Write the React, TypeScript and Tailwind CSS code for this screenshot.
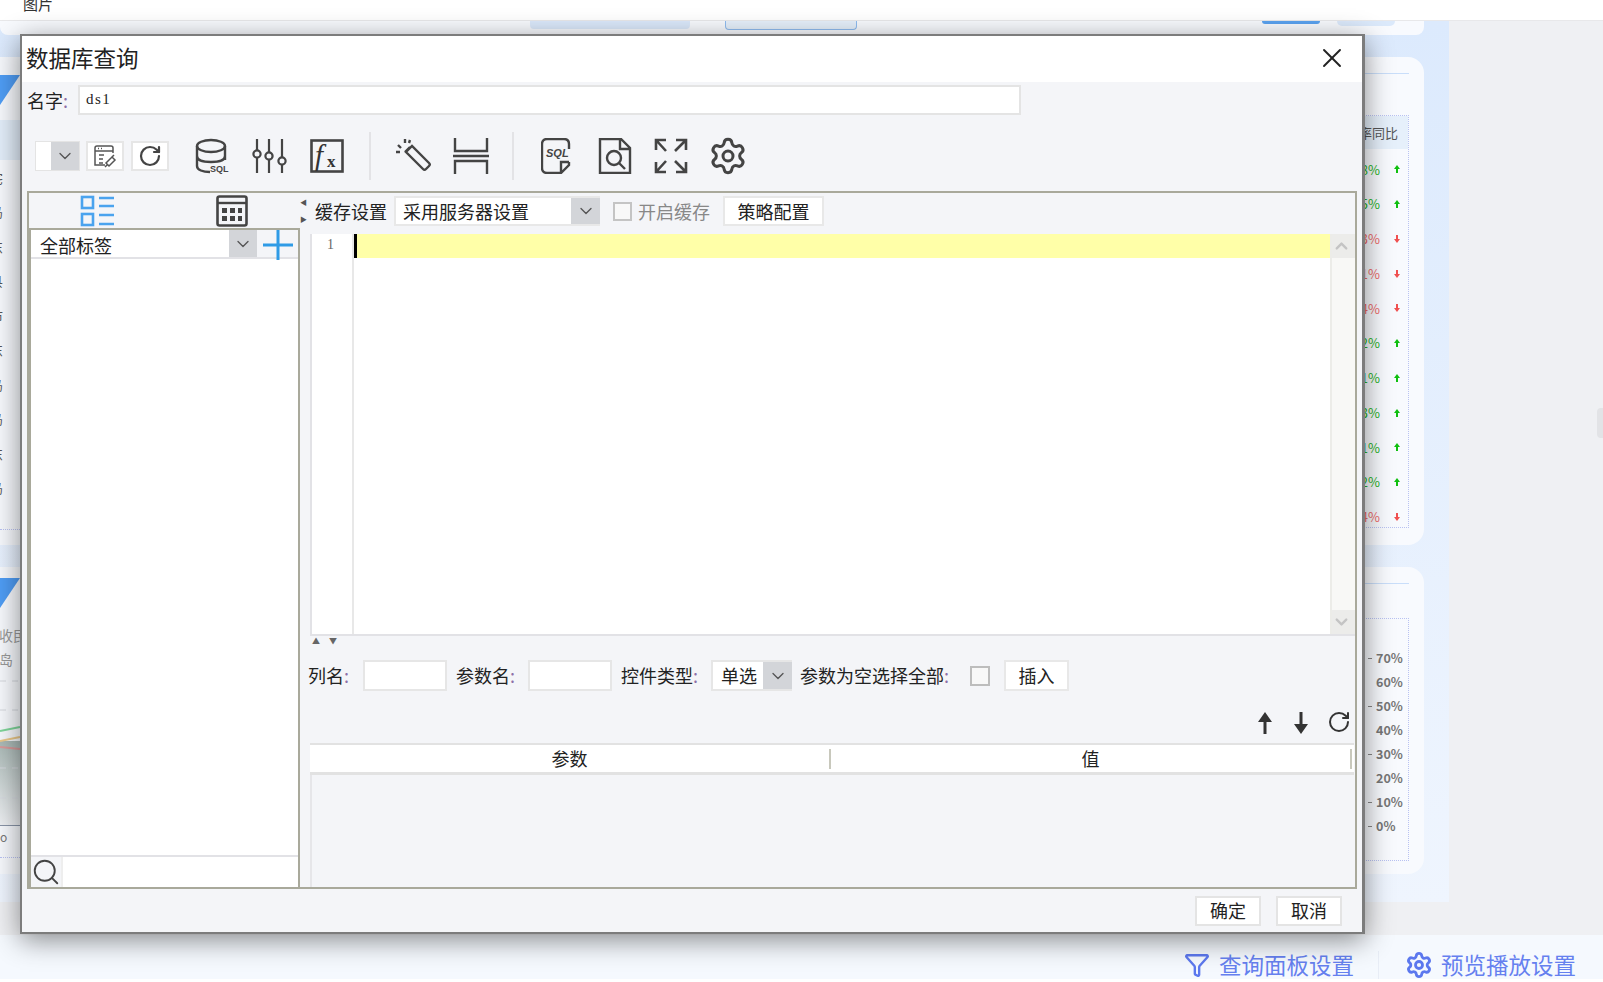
import React from "react";
import { ChevronDown, ChevronUp, Filter, RotateCw, Search, Settings, X } from "lucide-react";

const rates = [
  { v: "8%", up: true },
  { v: "15%", up: true },
  { v: "2.53%", up: false },
  { v: "1.41%", up: false },
  { v: "1.34%", up: false },
  { v: "1.42%", up: true },
  { v: "2.41%", up: true },
  { v: "1.13%", up: true },
  { v: "3.21%", up: true },
  { v: "12%", up: true },
  { v: "14%", up: false },
];

const axis = ["70%", "60%", "50%", "40%", "30%", "20%", "10%", "0%"];
const leftFrags = ["宅", "岛", "东", "县", "市", "东", "岛", "岛", "东", "岛"];

const Colon = () => <span className="text-[#8d6fa8]">:</span>;

const Chevron = ({ w }: { w: string }) => (
  <div className={`flex h-full items-center justify-center bg-[#d3d5d9] ${w}`}>
    <ChevronDown size={20} strokeWidth={1.6} className="text-[#555]" />
  </div>
);

const DbIcon = () => (
  <svg width="36" height="36" viewBox="0 0 36 36" fill="none" stroke="#444" strokeWidth="2.4">
    <ellipse cx="16" cy="8" rx="14" ry="6" />
    <path d="M2 8v20c0 4 6 6 13 6M30 8v14M2 18c0 4 6 6 14 6s14-2 14-6" />
    <text x="15" y="34" fontSize="9" fontWeight="700" fill="#444" stroke="none" fontFamily="Liberation Sans">SQL</text>
  </svg>
);

const SlidersIcon = () => (
  <svg width="36" height="36" viewBox="0 0 36 36" fill="none" stroke="#444" strokeWidth="2.2">
    <path d="M5 1v11M5 20v15M17 1v13M17 22v13M30 1v18M30 27v8" />
    <circle cx="5" cy="16" r="3.600" />
    <circle cx="17" cy="18" r="3.600" />
    <circle cx="30" cy="23" r="3.600" />
  </svg>
);

const FxIcon = () => (
  <svg width="34" height="34" viewBox="0 0 34 34" fill="none">
    <rect x="1.500" y="1.500" width="31" height="31" stroke="#444" strokeWidth="2.600" />
    <text x="5" y="26" fontSize="29" fontStyle="italic" fill="#333" fontFamily="Liberation Serif">f</text>
    <text x="17" y="28" fontSize="17" fontWeight="700" fill="#333" fontFamily="Liberation Serif">x</text>
  </svg>
);

const WandIcon = () => (
  <svg width="36" height="36" viewBox="0 0 36 36" fill="none" stroke="#444" strokeWidth="2.400">
    <path d="M11 14l6-6 17 17c1 1 1 2 0 3l-3 3c-1 1-2 1-3 0zM15 9l-5 5" />
    <path d="M1 14h4M3 7l3 3M10 1v4M15 2l-1 3" />
  </svg>
);

const SplitIcon = () => (
  <svg width="36" height="36" viewBox="0 0 36 36" fill="none" stroke="#444" strokeWidth="2.400">
    <path d="M2 0v13h32V0M0 18h36M2 36V23h32v13" />
  </svg>
);

const SqlDocIcon = () => (
  <svg width="32" height="36" viewBox="0 0 32 36" fill="none" stroke="#444" strokeWidth="2.400">
    <path d="M6 1h17c3 0 5 2 5 5v5M28 24v3l-8 8H6c-3 0-5-2-5-5V6c0-3 2-5 5-5M28 24h-8v10" />
    <text x="5" y="19" fontSize="11" fontWeight="700" fontStyle="italic" fill="#444" stroke="none" fontFamily="Liberation Sans">SQL</text>
  </svg>
);

const SearchDocIcon = () => (
  <svg width="34" height="36" viewBox="0 0 34 36" fill="none" stroke="#444" strokeWidth="2.400">
    <path d="M2 1h21l9 9v25H2zM22 1v10h10" />
    <circle cx="16" cy="20" r="7" />
    <path d="M21 25l6 6" />
  </svg>
);

const ExpandIcon = () => (
  <svg width="34" height="36" viewBox="0 0 34 36" fill="none" stroke="#444" strokeWidth="2.600">
    <path d="M2 12V2h10M2 2l10 11M32 12V2H22M32 2L21 13M2 24v10h10M2 34l10-11M32 24v10H22M32 34L21 23" />
  </svg>
);

const ListTabIcon = () => (
  <svg width="34" height="32" viewBox="0 0 34 32" fill="none" stroke="#4aa3ee" strokeWidth="2.600">
    <rect x="2" y="2" width="11" height="11" />
    <rect x="2" y="19" width="11" height="11" />
    <path d="M19 3h15M19 11h15M19 20h15M19 29h15" />
  </svg>
);

const CalcIcon = () => (
  <svg width="32" height="32" viewBox="0 0 32 32" fill="none">
    <rect x="1.500" y="1.500" width="29" height="29" rx="2" stroke="#444" strokeWidth="2.600" />
    <path d="M2 8h28" stroke="#444" strokeWidth="2.400" />
    <path d="M6 13h5v5H6zM14 13h5v5h-5zM22 13h4v5h-4zM6 21h5v5H6zM14 21h5v5h-5zM22 21h4v5h-4z" fill="#444" />
  </svg>
);

const ConnIcon = () => (
  <svg width="24" height="24" viewBox="0 0 24 24" fill="none" stroke="#555" strokeWidth="1.500">
    <path d="M20 9V4c0-1-1-2-2-2H4C3 2 2 3 2 4v17h10M2 7h18M5 4.500h1M8 4.500h1M6 11h5M6 15h4M6 19h4" />
    <path d="M13 19l6-6 3 3-6 6zM12 23l2-2M18 14l3-3" />
  </svg>
);

const UpArrow = () => (
  <svg width="16" height="22" viewBox="0 0 16 22" fill="#333">
    <path d="M8 0l7 10H9.500v12h-3V10H1z" />
  </svg>
);

const DownArrow = () => (
  <svg width="16" height="22" viewBox="0 0 16 22" fill="#333">
    <path d="M8 22l7-10H9.500V0h-3v12H1z" />
  </svg>
);

const TinyArrow = ({ up }: { up: boolean }) => (
  <svg width="6" height="8" viewBox="0 0 6 8" fill={up ? "#10c010" : "#f05050"} className="ml-[14px]">
    <path d={up ? "M3 0l3 4H4v4H2V4H0z" : "M3 8l3-4H4V0H2v4H0z"} />
  </svg>
);

const TriangleMark = () => (
  <div className="h-[30px] w-[20px] bg-[#4f9df5] [clip-path:polygon(0_0,100%_0,0_100%)]" />
);

const AreaChart = () => (
  <svg width="60" height="152" viewBox="0 0 60 152" fill="none" className="shrink-0">
    <defs>
      <linearGradient id="area" x1="0" y1="0" x2="0" y2="1">
        <stop offset="0" stopColor="#a9b8b5" />
        <stop offset="1" stopColor="#eef0f3" />
      </linearGradient>
    </defs>
    <rect x="0" y="68" width="60" height="84" fill="url(#area)" />
    <path d="M0 8h60M0 37h60M0 95h60M0 125h60" stroke="#d5d8de" strokeDasharray="6 6" />
    <path d="M0 58l20-4" stroke="#7fd69a" strokeWidth="2" />
    <path d="M0 68l20-4" stroke="#ecc98a" strokeWidth="2" />
    <path d="M0 74l20 2" stroke="#d89a9a" strokeWidth="2" />
  </svg>
);

const Background = () => (
  <div className="flex h-[914px] bg-[#eff0f3]">
    <div className="flex h-[881px] w-[1449px] flex-col bg-gradient-to-b from-[#dceafd] to-[#eff5fe] pr-[25px]">
      <div className="flex h-[14px] rounded-b-lg bg-[#f8fafe] pl-[530px]">
        <div className="h-[8px] w-[160px] rounded-b bg-[#dbe9fb]" />
        <div className="ml-[35px] h-[9px] w-[132px] rounded-b-sm border border-t-0 border-[#8fbcf0] bg-[#e6f0fb]" />
        <div className="ml-[405px] h-[3px] w-[58px] rounded-b-lg bg-[#5aa2f0]" />
        <div className="ml-[17px] h-[5px] w-[58px] rounded-b-lg bg-[#dbe9fb]" />
      </div>
      <div className="mt-[22px] flex gap-[20px]">
        <div className="flex w-[600px] flex-col gap-[22px]">
          <div className="flex h-[488px] flex-col rounded-br-lg bg-[#f7f9fd] pt-[18px]">
            <TriangleMark />
            <div className="mt-[15px] h-[40px] bg-[#e3eefa]" />
            <div className="flex h-[370px] flex-col border-b border-dotted border-[#b9c2f2]">
              {leftFrags.map((t, i) => (
                <div key={i} className="-ml-[10px] flex h-[34.500px] shrink-0 items-center text-[13px] text-[#555]">
                  {t}
                </div>
              ))}
            </div>
          </div>
          <div className="flex h-[307px] flex-col rounded-br-lg bg-[#f7f9fd] pt-[11px]">
            <TriangleMark />
            <div className="mt-[15px] -ml-[1px] text-[14px] leading-[24px] text-[#999]">
              <div>收民</div>
              <div>岛</div>
            </div>
            <div className="mt-[2px]">
              <AreaChart />
            </div>
            <div className="h-px bg-[#8a95a8]" />
            <div className="h-[32px] border-b border-dotted border-[#b9c2f2] pt-[2px] text-[12px] text-[#777]">
              o
            </div>
          </div>
        </div>
        <div className="flex flex-1 flex-col gap-[22px]">
          <div className="flex h-[488px] flex-col items-end rounded-2xl bg-[#f8fafe] pr-[15px] pt-[16px]">
            <div className="h-px w-[300px] bg-[#c9defa]" />
            <div className="mt-[41px] flex h-[413px] w-[300px] flex-col items-end border-b border-r border-t border-dotted border-[#b9c2f2]">
              <div className="mb-[3px] flex h-[33px] w-[291px] shrink-0 items-center justify-end bg-[#e6f0fb] pr-[10px] text-[13px] text-[#555]">
                环比率同比
              </div>
              {rates.map((r) => (
                <div
                  key={r.v + r.up}
                  className={`flex h-[34.750px] shrink-0 items-center pr-[8px] text-[13px] ${r.up ? "text-[#28b428]" : "text-[#ee6a6a]"}`}
                >
                  {r.v}
                  <TinyArrow up={r.up} />
                </div>
              ))}
            </div>
          </div>
          <div className="flex h-[307px] flex-col items-end rounded-2xl bg-[#f8fafe] pr-[15px] pt-[16px]">
            <div className="h-px w-[300px] bg-[#c9defa]" />
            <div className="mt-[34px] flex h-[243px] w-[300px] flex-col items-end border-b border-r border-t border-dotted border-[#b9c2f2] pr-[4px] pt-[27px]">
              {axis.map((a, i) => (
                <div key={a} className="flex h-[24px] w-[36px] items-center text-[12.500px] font-semibold text-[#777]">
                  <div className={`mr-[4px] h-px w-[4px] ${i % 2 === 0 || i === 7 ? "bg-[#888]" : "bg-transparent"}`} />
                  {a}
                </div>
              ))}
            </div>
          </div>
        </div>
      </div>
    </div>
  </div>
);

const Dialog = () => (
  <div className="absolute left-[20px] top-[34px] flex h-[900px] w-[1345px] flex-col border-2 border-r-[3px] border-[#7c7c7c] bg-white shadow-[0_6px_26px_rgba(0,0,0,0.45)]">
    <div className="flex h-[46px] shrink-0 items-center justify-between pb-[2px] pl-[4px] pr-[14px]">
      <span className="text-[22.500px] text-[#222]">数据库查询</span>
      <X size={32} strokeWidth={1.400} className="text-[#222]" />
    </div>

    <div className="flex flex-1 flex-col bg-[#f4f5f8]">
      <div className="flex h-[33px] items-end pl-[5px]">
        <span className="w-[51px] text-[18px] leading-[30px] text-[#222]">
          名字
          <Colon />
        </span>
        <div className="flex h-[30px] w-[943px] items-center border-2 border-[#e4e4e4] bg-white pb-[2px] pl-[6px] font-['Liberation_Serif',serif] text-[15px] tracking-[1.500px] text-[#222]">
          ds1
        </div>
      </div>

      <div className="flex h-[76px] items-center pt-[6px]">
        <div className="ml-[13px] flex h-[30px] w-[45px] border border-[#e4e4e4] bg-white">
          <div className="w-[15px]" />
          <Chevron w="w-[29px]" />
        </div>
        <div className="ml-[6px] flex h-[30px] w-[38px] items-center justify-center border-2 border-[#e6e6e6] bg-white">
          <ConnIcon />
        </div>
        <div className="ml-[7px] flex h-[30px] w-[38px] items-center justify-center border-2 border-[#e6e6e6] bg-white">
          <RotateCw size={24} strokeWidth={2.200} className="text-[#444]" />
        </div>
        <div className="ml-[26px]">
          <DbIcon />
        </div>
        <div className="ml-[21px]">
          <SlidersIcon />
        </div>
        <div className="ml-[22px]">
          <FxIcon />
        </div>
        <div className="ml-[25px] h-[48px] w-[2px] bg-[#e3e3e6]" />
        <div className="ml-[24px]">
          <WandIcon />
        </div>
        <div className="ml-[22px]">
          <SplitIcon />
        </div>
        <div className="ml-[23px] h-[48px] w-[2px] bg-[#e3e3e6]" />
        <div className="ml-[27px]">
          <SqlDocIcon />
        </div>
        <div className="ml-[25px]">
          <SearchDocIcon />
        </div>
        <div className="ml-[22px]">
          <ExpandIcon />
        </div>
        <div className="ml-[20px]">
          <Settings size={40} strokeWidth={1.800} className="text-[#444]" />
        </div>
      </div>

      <div className="ml-[5px] flex h-[698px] w-[1330px] border-2 border-[#a9a99b]">
        <div className="flex w-[271px] flex-col">
          <div className="flex h-[35px]">
            <div className="flex w-[135px] items-center justify-center">
              <ListTabIcon />
            </div>
            <div className="flex w-[135px] items-center justify-center">
              <CalcIcon />
            </div>
          </div>
          <div className="flex flex-1 flex-col border-2 border-b-0 border-[#a9a99b] bg-white">
            <div className="flex h-[29px] items-center border-b-2 border-[#e2e2e6]">
              <span className="ml-[9px] mt-[3px] w-[189px] text-[18px] text-[#222]">全部标签</span>
              <Chevron w="w-[28px]" />
              <div className="flex h-full flex-1 items-center justify-center bg-[#f4f5f8] pt-[3px]">
                <svg width="30" height="30" viewBox="0 0 30 30" stroke="#2f9be6" strokeWidth="3">
                  <path d="M15 0v30M0 15h30" />
                </svg>
              </div>
            </div>
            <div className="flex-1" />
            <div className="flex h-[32px] border-t-2 border-[#e2e2e6]">
              <div className="flex w-[30px] items-center justify-center bg-[#f4f5f8]">
                <Search size={30} strokeWidth={1.500} className="text-[#444]" />
              </div>
              <div className="flex-1 border-l-2 border-[#eee]" />
            </div>
          </div>
        </div>

        <div className="-ml-[3px] flex w-[13px] flex-col items-center pt-[1px] text-[7px] leading-[17px] text-[#555]">
          <span>◀</span>
          <span>▶</span>
        </div>

        <div className="flex flex-1 flex-col">
          <div className="flex h-[41px] items-center pb-[5px] pl-[5px] text-[18px] text-[#222]">
            <span className="w-[72px]">缓存设置</span>
            <div className="ml-[7px] flex h-[30px] w-[206px] items-center border-2 border-r-0 border-[#e8e8e8] bg-white">
              <span className="ml-[7px] w-[168px]">采用服务器设置</span>
              <Chevron w="w-[29px]" />
            </div>
            <div className="ml-[13px] h-[19px] w-[19px] border-2 border-[#c4c4c4] bg-[#f8f8f8]" />
            <span className="ml-[6px] w-[72px] text-[#888]">开启缓存</span>
            <div className="ml-[13px] flex h-[30px] w-[101px] items-center justify-center border-2 border-[#e8e8e8] bg-white">
              策略配置
            </div>
          </div>

          <div className="flex h-[402px] border-2 border-r-0 border-t-0 border-[#e2e2e6] bg-white">
            <div className="flex w-[42px] justify-center border-r-2 border-[#e8e8e8] pr-[3px] pt-[1px] font-['Liberation_Serif',serif] text-[14px] leading-[20px] text-[#666]">
              1
            </div>
            <div className="flex-1">
              <div className="flex h-[24px] bg-[#ffffa8]">
                <div className="h-full w-[3px] bg-black" />
              </div>
            </div>
            <div className="flex w-[25px] flex-col justify-between border-l-2 border-[#ecece8] bg-[#f8f8f6]">
              <div className="flex h-[24px] items-center justify-center bg-[#ececea] pr-[4px]">
                <ChevronUp size={20} strokeWidth={3} className="text-[#c4c4c4]" />
              </div>
              <div className="flex h-[24px] items-center justify-center bg-[#ececea] pr-[4px]">
                <ChevronDown size={20} strokeWidth={3} className="text-[#c4c4c4]" />
              </div>
            </div>
          </div>

          <div className="flex h-[10px] gap-[9px] pl-[2px] text-[8px] leading-[10px] text-[#666]">
            <span>▲</span>
            <span>▼</span>
          </div>

          <div className="mt-[14px] flex h-[31px] items-center text-[18px] text-[#222]">
            <span className="-ml-[2px] w-[55px] shrink-0 pb-[1px]">
              列名
              <Colon />
            </span>
            <div className="h-full w-[84px] border-2 border-[#e6e6e6] bg-white" />
            <span className="ml-[9px] w-[72px] shrink-0 pb-[1px]">
              参数名
              <Colon />
            </span>
            <div className="h-full w-[84px] border-2 border-[#e6e6e6] bg-white" />
            <span className="ml-[9px] w-[90px] shrink-0 pb-[1px]">
              控件类型
              <Colon />
            </span>
            <div className="flex h-full w-[81px] items-center border-2 border-r-0 border-[#e6e6e6] bg-white">
              <span className="ml-[8px] w-[42px]">单选</span>
              <Chevron w="w-[29px]" />
            </div>
            <span className="ml-[8px] w-[170px] shrink-0 pb-[1px]">
              参数为空选择全部
              <Colon />
            </span>
            <div className="h-[20px] w-[20px] border-2 border-[#bdbdbd] bg-[#f8f8f8]" />
            <div className="ml-[14px] flex h-full w-[65px] items-center justify-center border-2 border-[#e8e8e8] bg-white">
              插入
            </div>
          </div>

          <div className="flex h-[52px] items-end justify-end gap-[20px] pb-[9px] pr-[4px]">
            <UpArrow />
            <DownArrow />
            <RotateCw size={24} strokeWidth={2} className="-ml-[2px] text-[#333]" />
          </div>

          <div className="flex h-[32px] w-[1044px] border-b-[3px] border-t-2 border-[#e2e2e2] bg-white text-[18px] text-[#222]">
            <div className="flex w-[521px] items-center justify-center">
              <span className="flex-1 text-center">参数</span>
              <div className="h-[20px] w-[2px] bg-[#c8c8bc]" />
            </div>
            <div className="flex w-[521px] items-center justify-center">
              <span className="flex-1 text-center">值</span>
              <div className="h-[20px] w-[2px] bg-[#c8c8bc]" />
            </div>
          </div>
          <div className="flex-1 border-l-2 border-[#e6e6e9]" />
        </div>
      </div>

      <div className="flex flex-1 items-center justify-end gap-[15px] pr-[20px] text-[18px] text-[#222]">
        <div className="flex h-[30px] w-[66px] items-center justify-center border-2 border-[#e4e4e4] bg-white">确定</div>
        <div className="flex h-[30px] w-[66px] items-center justify-center border-2 border-[#e4e4e4] bg-white">取消</div>
      </div>
    </div>
  </div>
);

export default function App() {
  return (
    <div className="relative h-[982px] w-[1603px] overflow-hidden bg-white font-['Noto_Sans_CJK_SC','Liberation_Sans',sans-serif]">
      <div className="h-[21px] overflow-hidden border-b border-[#e8e8ea] pl-[23px] text-[15px] leading-[8px] text-[#333]">
        图片
      </div>
      <Background />
      <div className="flex h-[44px] items-center justify-end bg-[#f5f9fe] pr-[27px] pt-[16px] text-[22.500px] text-[#6580ef]">
        <Filter size={26} strokeWidth={2.200} className="text-[#5c78ee]" />
        <span className="ml-[9px]">查询面板设置</span>
        <div className="ml-[24px] mr-[26px] h-full w-px bg-[#e8edf6]" />
        <Settings size={28} strokeWidth={2.400} className="text-[#5c78ee]" />
        <span className="ml-[8px]">预览播放设置</span>
      </div>
      <div className="absolute right-0 top-[408px] h-[30px] w-[6px] rounded-l bg-[#e2e3e6]" />
      <Dialog />
    </div>
  );
}
